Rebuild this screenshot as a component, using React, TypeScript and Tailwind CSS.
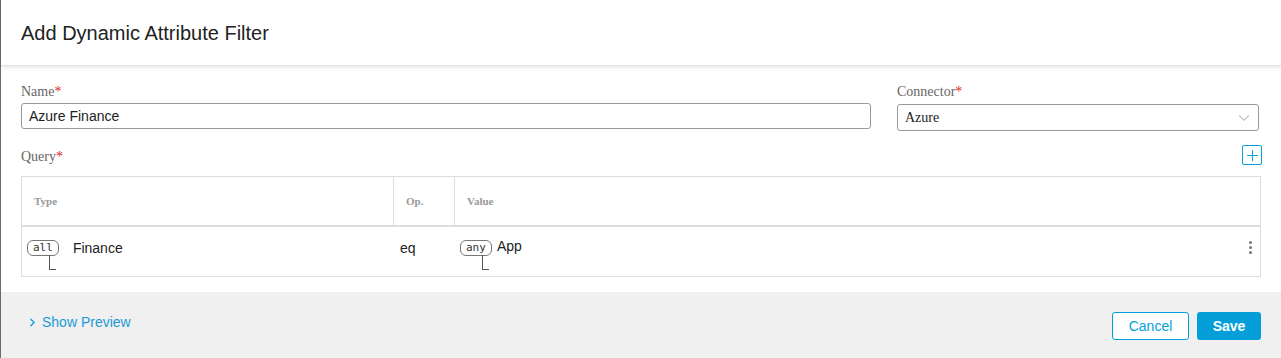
import { ChevronDown, ChevronRight, Plus } from 'lucide-react'

const serif = { fontFamily: '"Liberation Serif", "Times New Roman", serif' }

function Label({ text }: { text: string }) {
  return (
    <div className="font-['Liberation_Serif',serif] text-[14px] leading-[16px] text-[#666]">
      {text}
      <span className="text-[#e2231a]">*</span>
    </div>
  )
}

function Badge({ text }: { text: string }) {
  return (
    <div className="relative">
      <span className="inline-flex h-[16px] items-center rounded-[6px] border border-[#777] px-[5px] font-['DejaVu_Sans_Mono',monospace] text-[11px] leading-none text-[#333]">
        {text}
      </span>
      <div className="absolute left-[22px] top-[19px] h-[15px] w-[7px] border-b border-l border-[#555]" />
    </div>
  )
}

export default function App() {
  return (
    <div className="h-[358px] w-[1281px] border-l border-[#6b6b6b] bg-white font-['Liberation_Sans',Arial,sans-serif]">
      <div className="relative flex h-[66px] items-center border-b border-[#e4e4e4] px-5 shadow-[0_2px_3px_rgba(0,0,0,0.08)]">
        <h1 className="text-[20px] font-normal text-[#222]">Add Dynamic Attribute Filter</h1>
      </div>

      <div className="px-5 pt-[18px]">
        <div className="flex gap-[26px]">
          <div className="w-[850px]">
            <Label text="Name" />
            <div className="mt-[3px] flex h-[26px] items-center rounded-[3px] border border-[#999] px-[7px] text-[14px] text-[#222]">
              Azure Finance
            </div>
          </div>
          <div className="w-[362px]">
            <Label text="Connector" />
            <div className="mt-[4px] flex h-[27px] items-center justify-between rounded-[3px] border border-[#999] pl-[7px] pr-[5px] text-[14px] text-[#222]" style={serif}>
              Azure
              <ChevronDown className="h-[18px] w-[18px] text-[#c4c4c4]" strokeWidth={1.5} />
            </div>
          </div>
        </div>

        <div className="mt-[14px] flex items-end justify-between">
          <Label text="Query" />
          <div className="mr-[-1px] flex h-[20px] w-[20px] items-center justify-center rounded-[2px] border border-[#049fd9]">
            <Plus className="h-[17px] w-[17px] text-[#049fd9]" strokeWidth={1.5} />
          </div>
        </div>

        <div className="mt-[11px] border border-[#ddd]">
          <div className="flex h-[50px] border-b-2 border-[#ddd] text-[11px] font-bold text-[#999]" style={serif}>
            <div className="flex w-[372px] items-center border-r border-[#ddd] pl-[12px]">Type</div>
            <div className="flex w-[61px] items-center border-r border-[#ddd] pl-[12px]">Op.</div>
            <div className="flex flex-1 items-center pl-[12px]">Value</div>
          </div>
          <div className="flex h-[49px] pt-[9px] text-[14px] text-[#222]">
            <div className="flex w-[372px] items-start gap-[14px] pl-[5px]">
              <Badge text="all" />
              <span className="mt-[2px]">Finance</span>
            </div>
            <div className="w-[61px] pl-[6px]">
              <span className="mt-[2px] block">eq</span>
            </div>
            <div className="flex flex-1 items-start gap-[5px] pl-[5px]">
              <Badge text="any" />
              <span className="mt-0">App</span>
            </div>
            <div className="flex w-[20px] flex-col items-center gap-[2px] pt-[5px]">
              <span className="h-[3px] w-[3px] rounded-full bg-[#777]" />
              <span className="h-[3px] w-[3px] rounded-full bg-[#777]" />
              <span className="h-[3px] w-[3px] rounded-full bg-[#777]" />
            </div>
          </div>
        </div>
      </div>

      <div className="mt-[15px] flex h-[66px] items-start justify-between bg-[#f0f0f0] pl-[21px] pr-[20px] pt-[20px]">
        <div className="-mt-[3px] flex items-center gap-[3px] px-[4px] py-[3px] text-[14px] text-[#1b9ad6]">
          <ChevronRight className="h-[13px] w-[13px]" strokeWidth={2.5} />
          Show Preview
        </div>
        <div className="flex gap-[8px]">
          <button className="h-[28px] w-[77px] rounded-[3px] border border-[#049fd9] bg-white text-[14px] text-[#049fd9]">
            Cancel
          </button>
          <button className="h-[28px] w-[64px] rounded-[3px] bg-[#049fd9] text-[14px] font-bold text-white">
            Save
          </button>
        </div>
      </div>
    </div>
  )
}
